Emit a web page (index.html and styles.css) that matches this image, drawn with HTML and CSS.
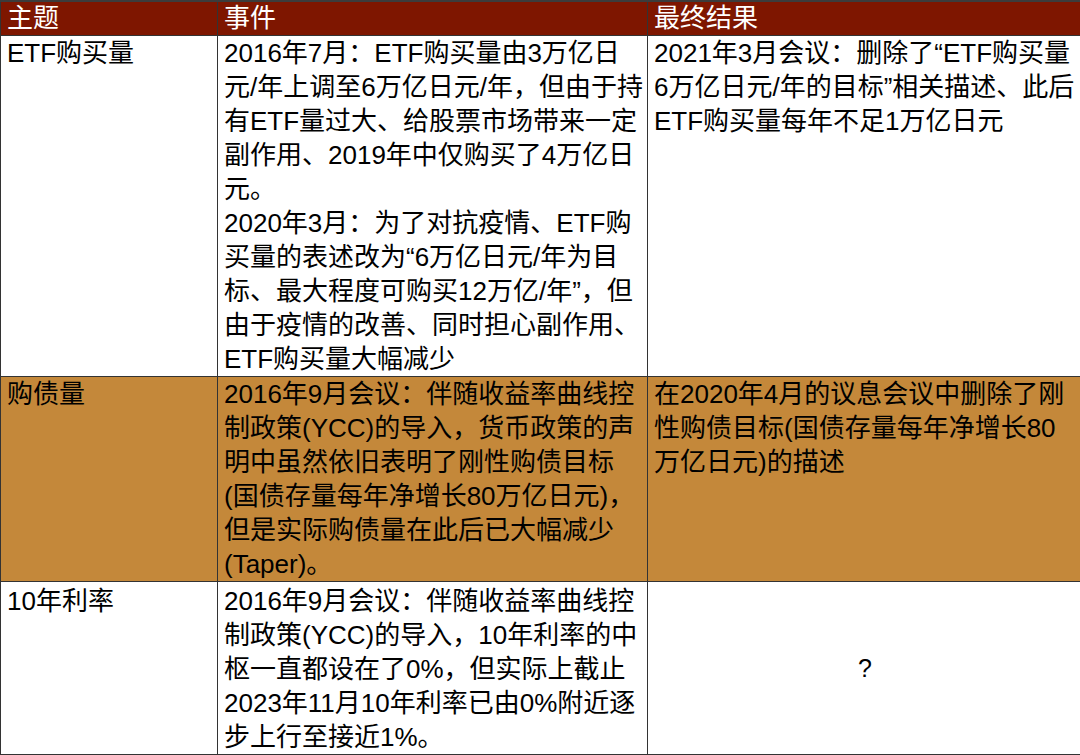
FILE: index.html
```html
<!DOCTYPE html>
<html lang="zh-CN">
<head>
<meta charset="utf-8">
<title>日本央行政策</title>
<link rel="stylesheet" href="styles.css">
</head>
<body>
<table class="grid">
  <colgroup>
    <col class="c1">
    <col class="c2">
    <col class="c3">
  </colgroup>
  <thead>
    <tr class="head">
      <th>主题</th>
      <th>事件</th>
      <th>最终结果</th>
    </tr>
  </thead>
  <tbody>
    <tr class="r1">
      <td>ETF购买量</td>
      <td>2016年7月：ETF购买量由3万亿日<br>元/年上调至6万亿日元/年，但由于持<br>有ETF量过大、给股票市场带来一定<br>副作用、2019年中仅购买了4万亿日<br>元。<br>2020年3月：为了对抗疫情、ETF购<br>买量的表述改为“6万亿日元/年为目<br>标、最大程度可购买12万亿/年”，但<br>由于疫情的改善、同时担心副作用、<br>ETF购买量大幅减少</td>
      <td>2021年3月会议：删除了“ETF购买量<br>6万亿日元/年的目标”相关描述、此后<br>ETF购买量每年不足1万亿日元</td>
    </tr>
    <tr class="r2 hl">
      <td>购债量</td>
      <td>2016年9月会议：伴随收益率曲线控<br>制政策(YCC)的导入，货币政策的声<br>明中虽然依旧表明了刚性购债目标<br>(国债存量每年净增长80万亿日元)，<br>但是实际购债量在此后已大幅减少<br>(Taper)。</td>
      <td>在2020年4月的议息会议中删除了刚<br>性购债目标(国债存量每年净增长80<br>万亿日元)的描述</td>
    </tr>
    <tr class="r3">
      <td>10年利率</td>
      <td>2016年9月会议：伴随收益率曲线控<br>制政策(YCC)的导入，10年利率的中<br>枢一直都设在了0%，但实际上截止<br>2023年11月10年利率已由0%附近逐<br>步上行至接近1%。</td>
      <td class="q">?</td>
    </tr>
  </tbody>
</table>
</body>
</html>
```
FILE: styles.css
```css
html, body {
  margin: 0;
  padding: 0;
  background: #ffffff;
}

.grid {
  width: 1080px;
  table-layout: fixed;
  border-collapse: collapse;
  font-family: "Liberation Sans", "Noto Sans CJK SC", sans-serif;
  font-size: 26px;
  line-height: 34px;
  color: #000000;
  border-top: 2px solid #3c3c3c;
  margin-top: 0;
}

.c1 { width: 217px; }
.c2 { width: 430px; }
.c3 { width: 433px; }

.grid th,
.grid td {
  border: 1px solid #333333;
  padding: 0 4px 0 6px;
  vertical-align: top;
  text-align: left;
  white-space: nowrap;
  overflow: hidden;
}

.grid th {
  background: #7e1600;
  color: #ffffff;
  font-weight: normal;
  font-size: 26px;
  height: 33px;
  line-height: 33px;
  border-top: 2px solid #3c3c3c;
}

.r1 td { height: 340px; }
.r2 td { height: 203px; }
.r3 td { height: 169px; padding-top: 2px; }

.hl td {
  background: #c4883a;
}

.grid td.q {
  text-align: center;
  vertical-align: middle;
  font-size: 25px;
  padding-top: 0;
}
```
